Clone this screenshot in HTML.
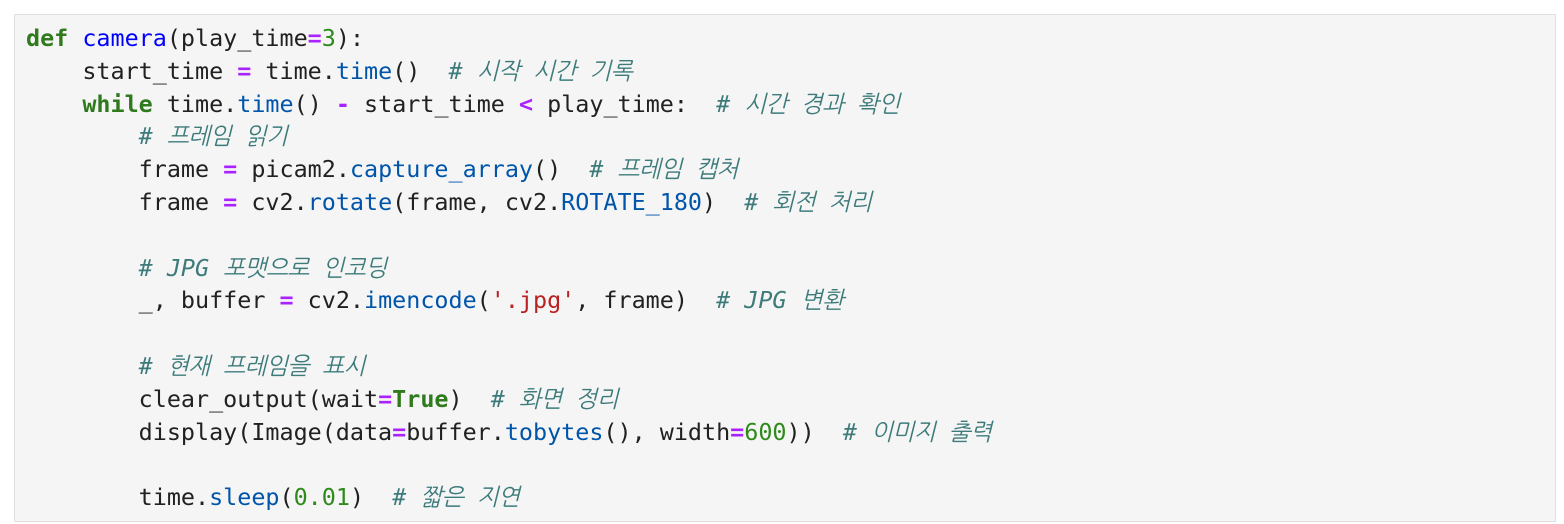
<!DOCTYPE html>
<html><head><meta charset="utf-8"><style>
html,body{margin:0;padding:0;background:#fff;width:1564px;height:524px;overflow:hidden}
.box{position:absolute;left:14px;top:14px;width:1540px;height:506px;background:#f5f5f5;border:1px solid #e0e0e0}
pre{margin:0;position:absolute;left:11px;top:7px;font-family:"DejaVu Sans Mono","Liberation Mono","NanumGothic",monospace;font-size:23.4px;line-height:32.8px;color:#212121}
.k{color:#2f7a1c;font-weight:bold}.f{color:#0000ff}.n{color:#2f8a1c}.o{color:#aa22ff;font-weight:bold}
.p{color:#0055aa}.s{color:#ba2121}.c{color:#3d7b7b;font-style:italic}
.h{letter-spacing:-0.6px}
</style></head><body><div class="box"><pre><span class="k">def</span> <span class="f">camera</span>(play_time<span class="o">=</span><span class="n">3</span>):
    start_time <span class="o">=</span> time.<span class="p">time</span>()  <span class="c"># <span class="h">시작 시간 기록</span></span>
    <span class="k">while</span> time.<span class="p">time</span>() <span class="o">-</span> start_time <span class="o">&lt;</span> play_time:  <span class="c"># <span class="h">시간 경과 확인</span></span>
        <span class="c"># <span class="h">프레임 읽기</span></span>
        frame <span class="o">=</span> picam2.<span class="p">capture_array</span>()  <span class="c"># <span class="h">프레임 캡처</span></span>
        frame <span class="o">=</span> cv2.<span class="p">rotate</span>(frame, cv2.<span class="p">ROTATE_180</span>)  <span class="c"># <span class="h">회전 처리</span></span>

        <span class="c"># JPG <span class="h">포맷으로 인코딩</span></span>
        _, buffer <span class="o">=</span> cv2.<span class="p">imencode</span>(<span class="s">'.jpg'</span>, frame)  <span class="c"># JPG <span class="h">변환</span></span>

        <span class="c"># <span class="h">현재 프레임을 표시</span></span>
        clear_output(wait<span class="o">=</span><span class="k">True</span>)  <span class="c"># <span class="h">화면 정리</span></span>
        display(Image(data<span class="o">=</span>buffer.<span class="p">tobytes</span>(), width<span class="o">=</span><span class="n">600</span>))  <span class="c"># <span class="h">이미지 출력</span></span>

        time.<span class="p">sleep</span>(<span class="n">0.01</span>)  <span class="c"># <span class="h">짧은 지연</span></span></pre></div></body></html>
